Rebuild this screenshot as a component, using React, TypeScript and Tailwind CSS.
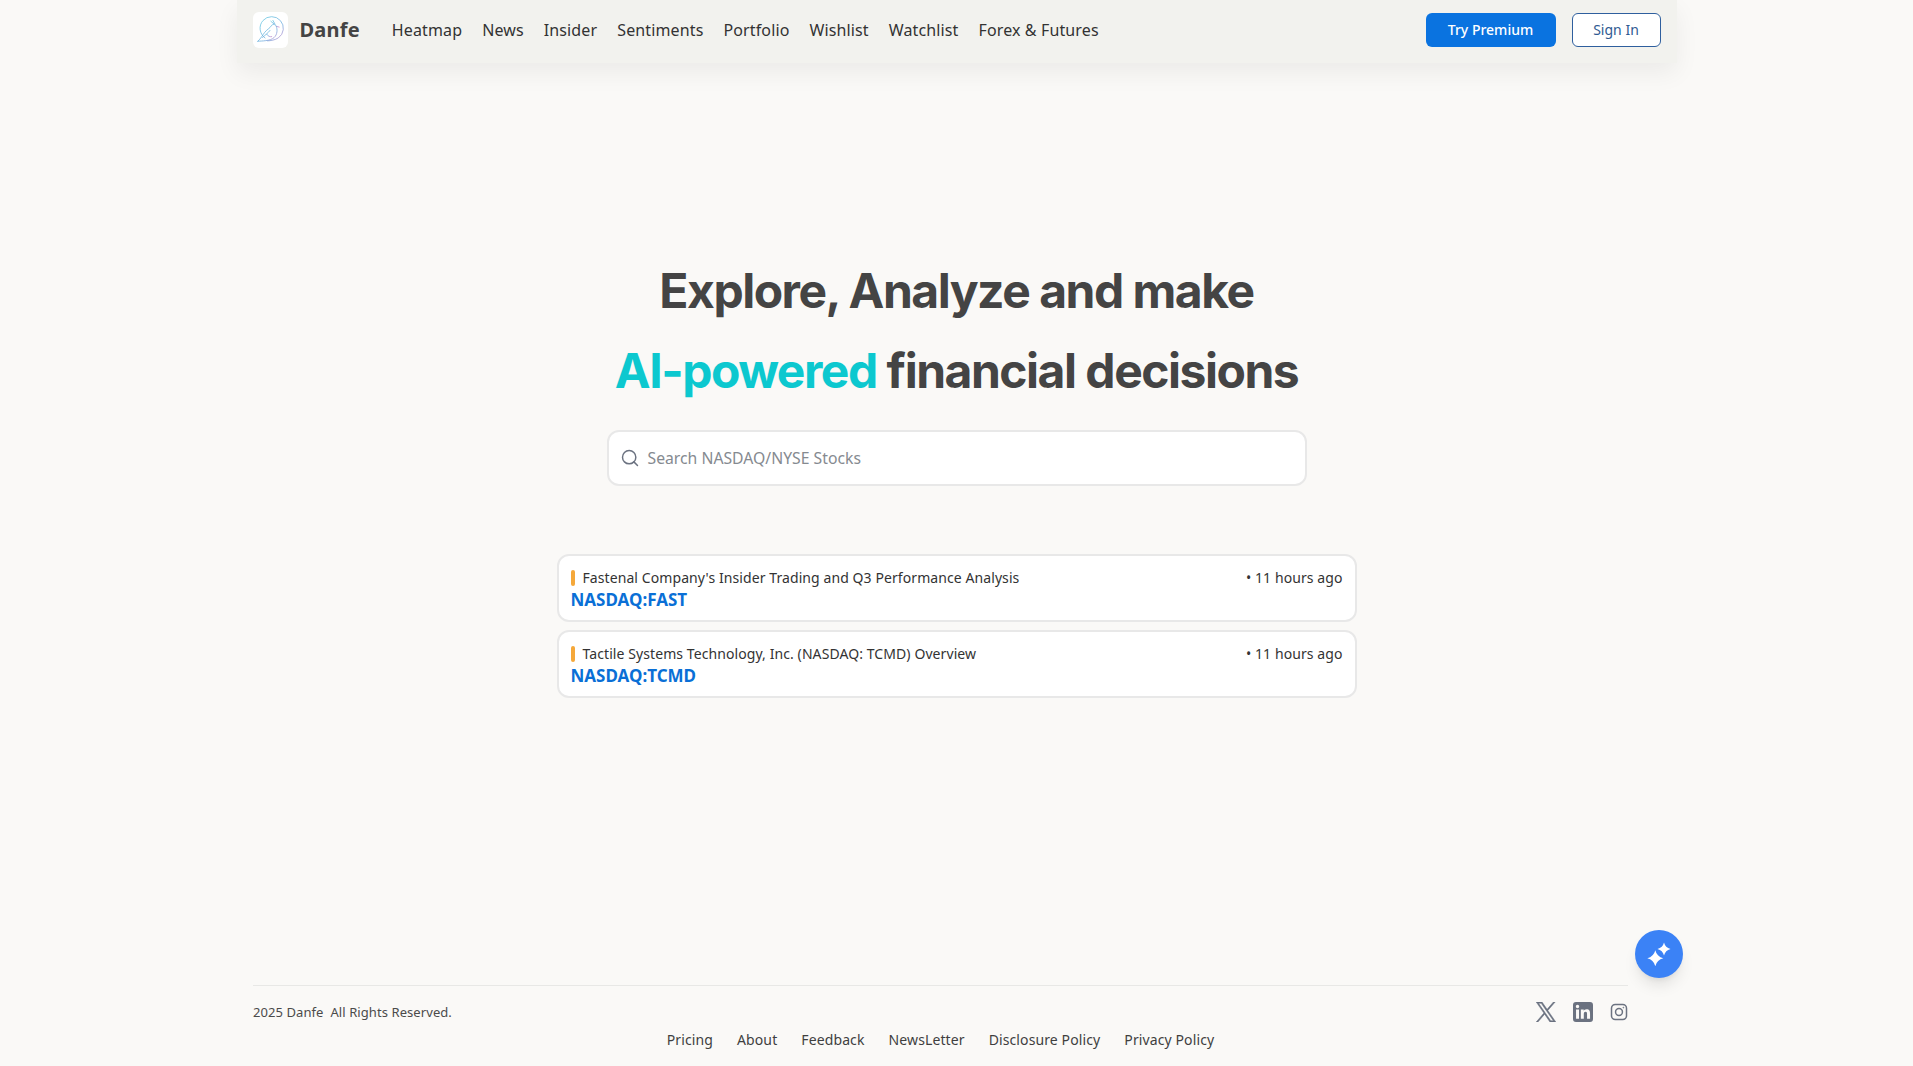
import { Search } from "lucide-react"

const navLinks = ["Heatmap", "News", "Insider", "Sentiments", "Portfolio", "Wishlist", "Watchlist", "Forex & Futures"]
const footerLinks = ["Pricing", "About", "Feedback", "NewsLetter", "Disclosure Policy", "Privacy Policy"]
const feed = [
  { title: "Fastenal Company's Insider Trading and Q3 Performance Analysis", symbol: "NASDAQ:FAST" },
  { title: "Tactile Systems Technology, Inc. (NASDAQ: TCMD) Overview", symbol: "NASDAQ:TCMD" },
]

function BirdLogo() {
  return (
    <svg viewBox="0 0 36 36" className="w-[30px] h-[30px]" fill="none" strokeWidth="0.9" strokeLinecap="round" strokeLinejoin="round">
      <defs>
        <linearGradient id="bird" x1="0" y1="0" x2="1" y2="1">
          <stop offset="0" stopColor="#5cc8e0" />
          <stop offset="0.65" stopColor="#6aa8dc" />
          <stop offset="1" stopColor="#d77fc8" />
        </linearGradient>
      </defs>
      <path d="M12 27.5A14 14 0 1 1 28 27.5C24 30 19 31 15 31" stroke="url(#bird)" />
      <path d="M3.5 31.5C8 31 18 31.5 23 27C27 23.5 27 17 25.5 13.5C24.5 11 21 10.5 19.5 13C18 16 14 17.5 11.5 21C9 24.5 7 28 3.5 31.5Z" stroke="url(#bird)" />
      <path d="M19 7.5L22.5 10.5M21.5 6.5L24 11M25.5 13.5L29 14.5" stroke="url(#bird)" />
      <path d="M9 27C12 24 15 22.5 18 18.5M14 23C15.5 25.5 18 26.5 20 26" stroke="url(#bird)" />
    </svg>
  )
}

function XLogo() {
  return (
    <svg viewBox="0 0 24 24" className="w-5 h-5" fill="#6b7280">
      <path d="M14.23 10.16 22.97 0h-2.07l-7.59 8.82L7.25 0H.26l9.17 13.34L.26 24h2.07l8.02-9.32L16.75 24h6.99L14.23 10.16Zm-2.84 3.3-.93-1.33L3.07 1.56h3.18l5.97 8.53.93 1.33 7.75 11.09h-3.18l-6.33-9.05Z" stroke="#6b7280" strokeWidth="0.6" />
    </svg>
  )
}

function LinkedinLogo() {
  return (
    <svg viewBox="0 0 24 24" className="w-5 h-5" fill="#6b7280">
      <path d="M20.45 0H3.55A3.55 3.55 0 0 0 0 3.55v16.9A3.55 3.55 0 0 0 3.55 24h16.9A3.55 3.55 0 0 0 24 20.45V3.55A3.55 3.55 0 0 0 20.45 0ZM7.2 20.1H3.65V9h3.55v11.1ZM5.42 7.5a2.05 2.05 0 1 1 0-4.1 2.05 2.05 0 0 1 0 4.1ZM20.4 20.1h-3.55v-5.4c0-1.3-.02-2.95-1.8-2.95-1.8 0-2.08 1.4-2.08 2.86v5.49H9.42V9h3.4v1.52h.05c.47-.9 1.63-1.82 3.35-1.82 3.58 0 4.24 2.36 4.24 5.42v6.48Z" />
    </svg>
  )
}

function InstagramLogo() {
  return (
    <svg viewBox="0 0 24 24" className="w-[18px] h-[18px]" fill="none" stroke="#6b7280" strokeWidth="2">
      <rect x="2" y="2" width="20" height="20" rx="5" />
      <circle cx="12" cy="12" r="4.6" />
      <circle cx="17.8" cy="6.2" r="0.6" fill="#6b7280" strokeWidth="1" />
    </svg>
  )
}

function Sparkles() {
  return (
    <svg viewBox="0 0 24 24" className="w-6 h-6" fill="#ffffff">
      <path d="M8.3 8.3Q9.9 14.7 16.3 16.3Q9.9 17.9 8.3 24.3Q6.7 17.9 0.3 16.3Q6.7 14.7 8.3 8.3Z" />
      <path d="M17 0.5Q18.3 5.7 23.5 7Q18.3 8.3 17 13.5Q15.7 8.3 10.5 7Q15.7 5.7 17 0.5Z" />
    </svg>
  )
}

export default function App() {
  return (
    <div className="relative min-h-screen flex flex-col bg-[#faf9f7] text-[#3f3f3f] font-['Noto_Sans',sans-serif]">
      {/* Barre du haut */}
      <header className="w-[1440px] mx-auto h-[63px] px-4 pb-[3px] flex items-center bg-[#f2f2ee] shadow-[0_10px_25px_rgba(0,0,0,0.06)]">
        <div className="w-[35px] h-9 rounded-md bg-white flex items-center justify-center">
          <BirdLogo />
        </div>
        <span className="ml-3 text-[20px] tracking-[0.01em] font-bold text-[#444444]">Danfe</span>
        <nav className="ml-8 flex items-center gap-5 text-[16px] tracking-[0.008em] text-[#333333]">
          {navLinks.map((l) => (
            <a key={l}>{l}</a>
          ))}
        </nav>
        <div className="ml-auto flex items-center gap-4">
          <button className="w-[130px] h-[34px] pb-px rounded-md bg-[#0a73e0] text-white text-[14px] font-medium">Try Premium</button>
          <button className="w-[89px] h-[34px] pb-px rounded-md bg-white border border-[#2f5f9e] text-[#2f5a92] text-[14px]">Sign In</button>
        </div>
      </header>

      <main className="flex-1 flex flex-col items-center pt-[188px]">
        <h1 className="text-center text-[48px] leading-[80px] font-[650] tracking-[-0.031em] text-[#444444] font-['Inter',sans-serif]">
          Explore, Analyze and make
          <br />
          <span className="text-[#0cc8cf]">AI-powered</span> financial decisions
        </h1>

        <div className="mt-[19px] w-[700px] h-[56px] pl-[11px] pr-3 flex items-center gap-2 rounded-xl bg-white border-2 border-[#e8e8e8]">
          <Search className="w-5 h-5 text-[#6b7280]" strokeWidth={1.75} />
          <span className="pt-px text-[15.75px] text-[#858a90]">Search NASDAQ/NYSE Stocks</span>
        </div>

        <div className="mt-[68px] w-[800px] flex flex-col gap-2">
          {feed.map((item) => (
            <div key={item.symbol} className="h-[68px] px-3 pt-3 rounded-xl bg-white border-2 border-[#e8e8e8]">
              <div className="flex items-center justify-between text-[14px] leading-[20px] tracking-[0.006em] text-[#333333]">
                <div className="flex items-center gap-2">
                  <span className="w-1 h-4 rounded-full bg-[#f5a83a]" />
                  <span>{item.title}</span>
                </div>
                <span>• 11 hours ago</span>
              </div>
              <div className="text-[17px] leading-[24px] font-bold text-[#0a6fd6]">{item.symbol}</div>
            </div>
          ))}
        </div>
      </main>

      <footer className="w-[1375px] ml-[253px] h-[81px] border-t border-[#e8e8e6]">
        <div className="pt-[16px] flex items-center justify-between">
          <span className="text-[13px] leading-[20px] tracking-[0.006em] text-[#4b4b4b]">2025 Danfe&nbsp; All Rights Reserved.</span>
          <div className="flex items-center gap-[17px]">
            <XLogo />
            <LinkedinLogo />
            <InstagramLogo />
          </div>
        </div>
        <div className="mt-[8px] flex justify-center gap-6 text-[14px] leading-[20px] tracking-[0.008em] text-[#3f3f3f]">
          {footerLinks.map((l) => (
            <a key={l}>{l}</a>
          ))}
        </div>
      </footer>

      {/* Bouton flottant */}
      <button className="absolute left-[1635px] top-[930px] w-12 h-12 rounded-full bg-[#3b82f6] flex items-center justify-center shadow-lg">
        <Sparkles />
      </button>
    </div>
  )
}
